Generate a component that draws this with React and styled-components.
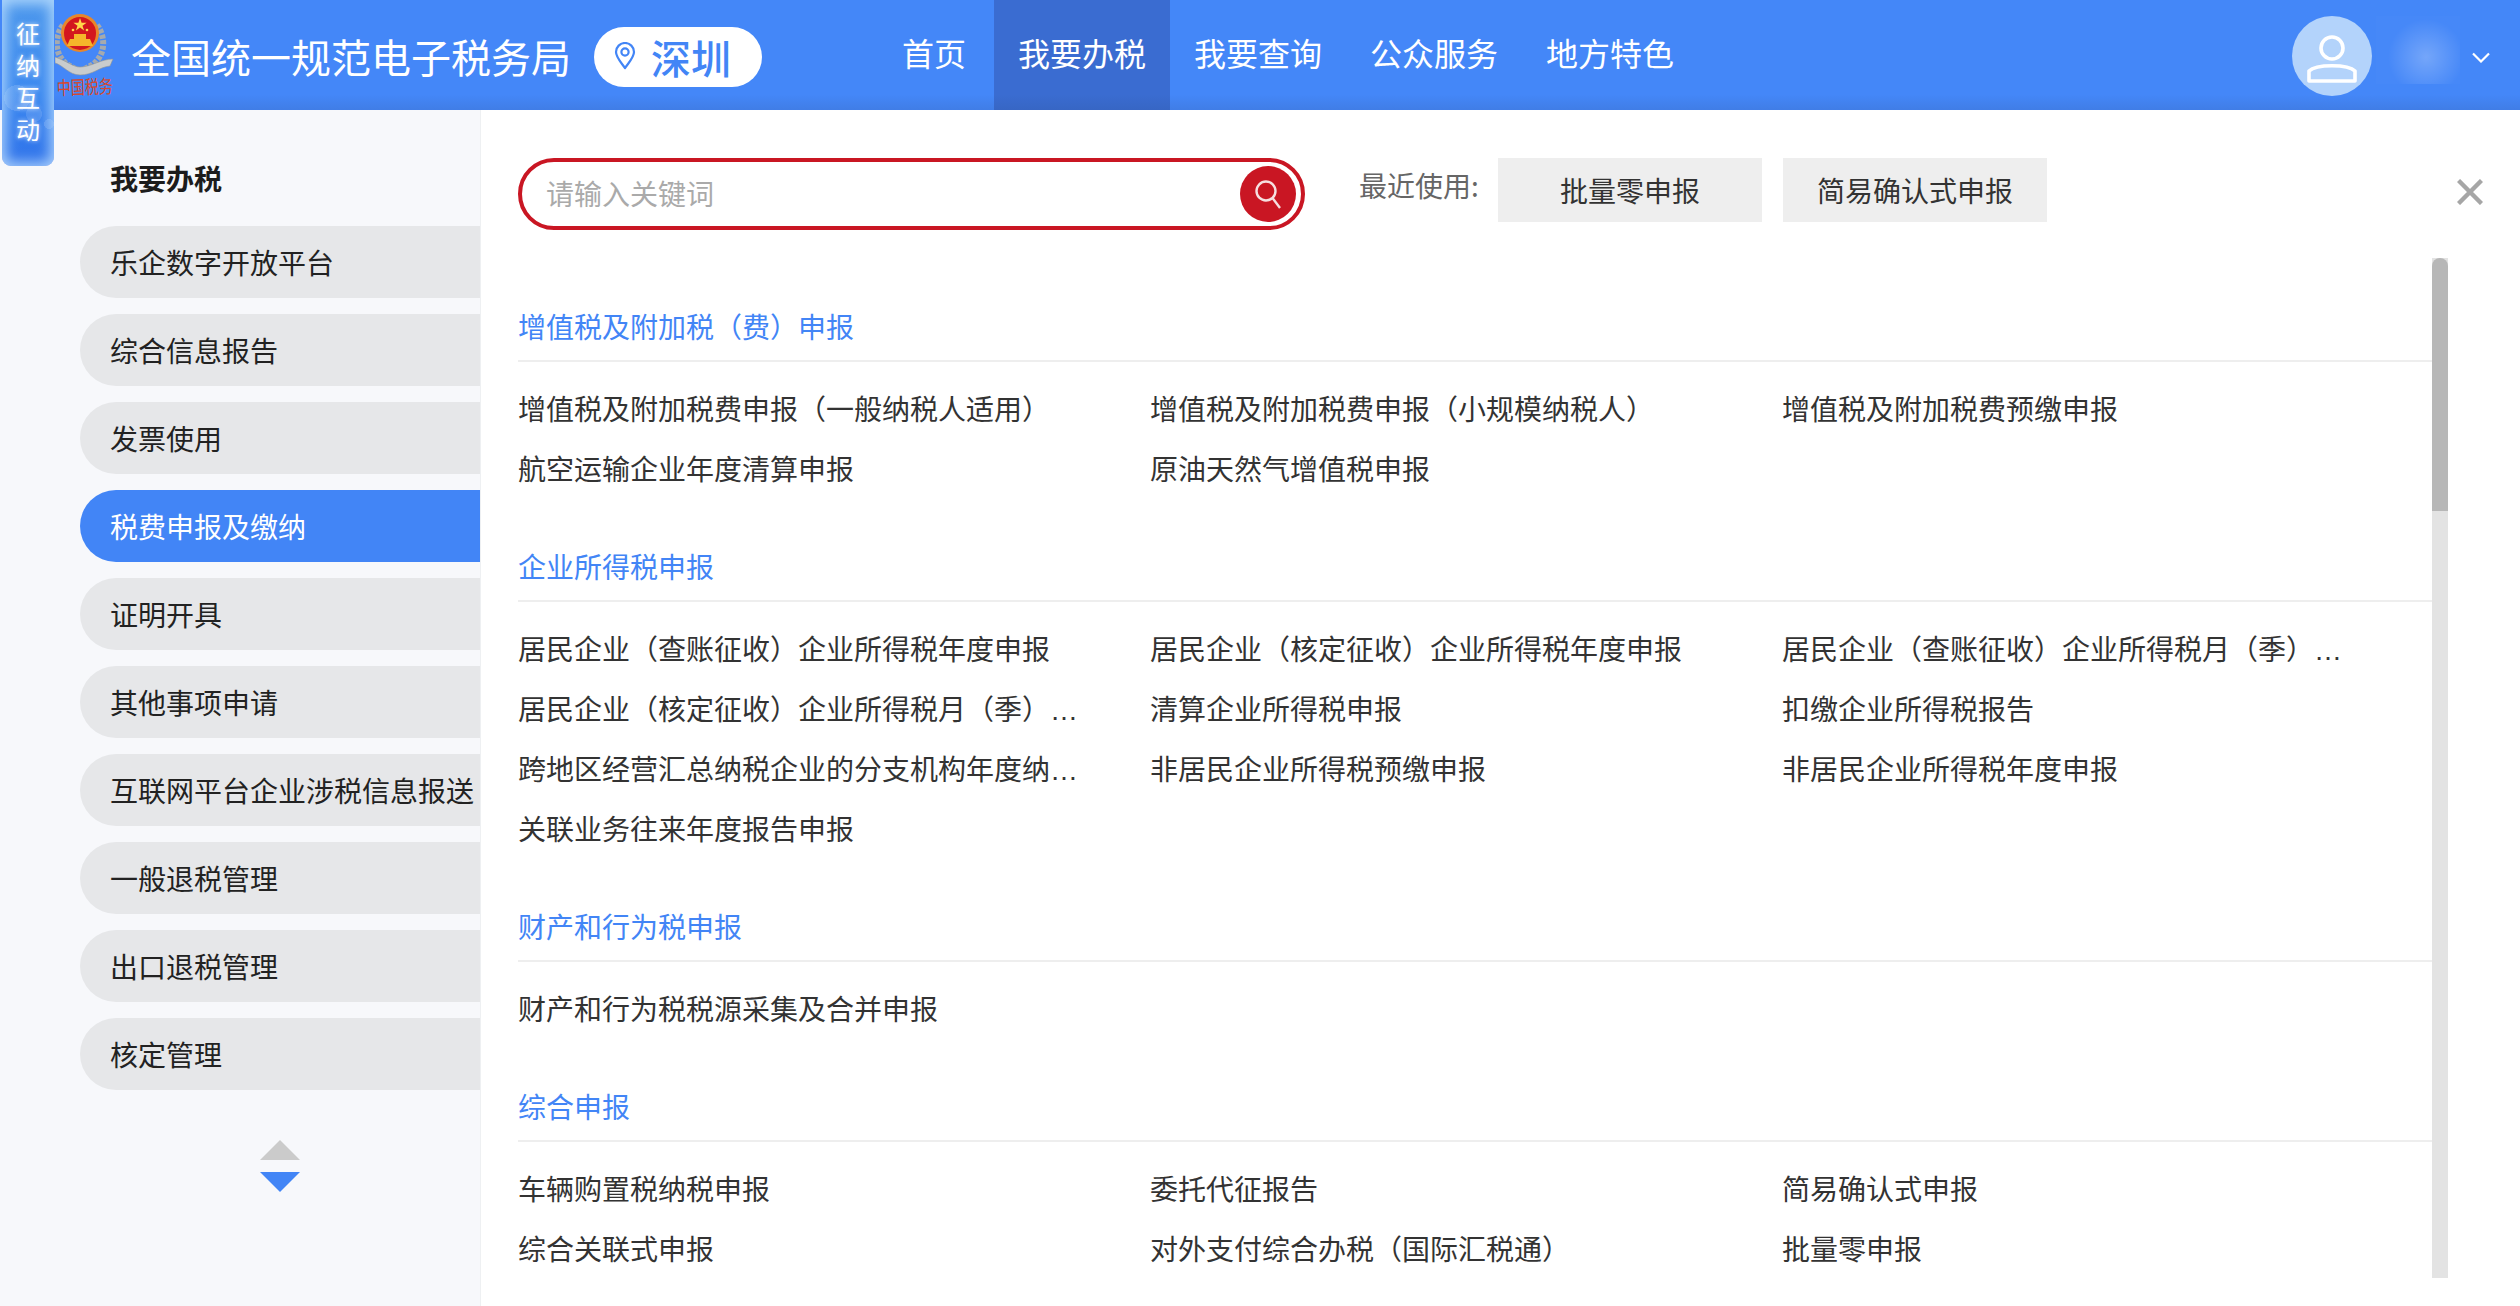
import React from 'react';
import styled, { createGlobalStyle } from 'styled-components';

const FONT = '"Noto Sans CJK SC", "Noto Sans", sans-serif';
const BLUE = '#4285f6';

const Global = createGlobalStyle`
  * { box-sizing: border-box; }
  html, body { margin: 0; padding: 0; height: 100%; background: #fff; font-family: ${FONT}; }
  #root { height: 100%; }
`;

const Page = styled.div`
  position: relative;
  display: flex;
  flex-direction: column;
  height: 100vh;
  overflow: hidden;
`;

const Header = styled.header`
  display: flex;
  align-items: center;
  flex: none;
  height: 110px;
  padding: 0 30px 0 55px;
  background: linear-gradient(#4487f8 0, #4487f8 86%, #407de6 100%);
  color: #fff;
`;

const Badge = styled.div`
  position: absolute;
  left: 2px;
  top: 0;
  z-index: 5;
  display: flex;
  flex-direction: column;
  align-items: center;
  width: 52px;
  height: 166px;
  padding-top: 17px;
  border-radius: 0 0 9px 9px;
  background:
    radial-gradient(circle 13px at 15px 98px, rgba(255, 255, 255, 0.14) 98%, transparent),
    radial-gradient(circle 8px at 32px 114px, rgba(255, 255, 255, 0.12) 98%, transparent),
    radial-gradient(circle 5px at 47px 124px, rgba(255, 255, 255, 0.14) 98%, transparent),
    linear-gradient(#4d98ec, #3d8af0 55%, #2f72ea);
  box-shadow: inset 0 0 13px 4px rgba(195, 228, 255, 0.8);
`;

const BadgeChar = styled.span`
  color: #fff;
  font-size: 24px;
  line-height: 32px;
  text-shadow: 0 0 4px rgba(255, 255, 255, 0.8);
`;

const LogoMark = styled.svg`
  flex: none;
  width: 60px;
  height: 86px;
  margin-top: 2px;
`;

const SiteTitle = styled.h1`
  margin: 2px 0 0 16px;
  font-size: 40px;
  font-weight: 400;
  line-height: 56px;
  white-space: nowrap;
`;

const CityPill = styled.div`
  display: flex;
  align-items: center;
  flex: none;
  width: 168px;
  height: 60px;
  margin: 4px 0 0 23px;
  padding-left: 20px;
  border-radius: 30px;
  background: #fff;
  color: ${BLUE};
  font-size: 40px;
  font-weight: 500;
`;

const CityName = styled.span`
  margin-left: 15px;
  line-height: 60px;
`;

const PinIcon = styled.svg`
  flex: none;
  margin-top: -2px;
`;

const Nav = styled.nav`
  display: flex;
  align-self: stretch;
  margin-left: 120px;
`;

const NavItem = styled.a`
  display: flex;
  align-items: center;
  padding: 0 0 6px ${p => (p.$short ? '20px' : '24px')};
  width: ${p => (p.$short ? '112px' : '176px')};
  font-size: 32px;
  white-space: nowrap;
  background: ${p => (p.$active ? 'linear-gradient(#3a6cd1 0, #3a6cd1 86%, #3766c4 100%)' : 'transparent')};
`;

const User = styled.div`
  display: flex;
  align-items: center;
  margin-left: auto;
  padding-top: 2px;
`;

const Avatar = styled.div`
  display: flex;
  align-items: center;
  justify-content: center;
  width: 80px;
  height: 80px;
  border-radius: 50%;
  background: #b3d3fb;
`;

const BlurredName = styled.div`
  width: 84px;
  height: 68px;
  margin: -12px 0 0 4px;
  background:
    radial-gradient(circle 38px at 50px 41px, rgba(255, 255, 255, 0.25), transparent),
    rgba(255, 255, 255, 0.015);
`;

const Chevron = styled.svg`
  width: 18px;
  height: 11px;
  margin-left: 12px;
  margin-top: 2px;
`;

const Body = styled.div`
  display: flex;
  flex: 1;
  min-height: 0;
`;

const Sidebar = styled.aside`
  flex: none;
  width: 481px;
  padding: 48px 0 0 80px;
  background: #f7f8fb;
  border-right: 1px solid #eef0f2;
`;

const SideTitle = styled.h2`
  margin: 0 0 28px 30px;
  font-size: 28px;
  font-weight: 700;
  line-height: 40px;
  color: #1c1c1c;
`;

const SideList = styled.div`
  display: flex;
  flex-direction: column;
  gap: 16px;
`;

const SideItem = styled.a`
  display: flex;
  align-items: center;
  height: 72px;
  padding: 0 0 1px 30px;
  border-radius: 36px 0 0 36px;
  font-size: 28px;
  white-space: nowrap;
  color: ${p => (p.$active ? '#fff' : '#222')};
  background: ${p => (p.$active ? BLUE : '#e6e7e9')};
`;

const Pager = styled.div`
  display: flex;
  flex-direction: column;
  align-items: center;
  gap: 12px;
  width: 400px;
  margin-top: 50px;
`;

const Triangle = styled.span`
  width: 0;
  height: 0;
  border-left: 20px solid transparent;
  border-right: 20px solid transparent;
  ${p => (p.$down ? `border-top: 20px solid ${BLUE};` : 'border-bottom: 20px solid #cbcbcb;')}
`;

const Main = styled.main`
  flex: 1;
  min-width: 0;
  padding-top: 48px;
  background: #fff;
`;

const TopRow = styled.div`
  display: flex;
  align-items: flex-start;
  height: 72px;
  padding: 0 37px 0 37px;
`;

const SearchBox = styled.form`
  display: flex;
  align-items: center;
  flex: none;
  width: 787px;
  height: 72px;
  padding: 0 5px 0 24px;
  border: 4px solid #c91623;
  border-radius: 36px;
`;

const SearchInput = styled.input`
  flex: 1;
  min-width: 0;
  height: 56px;
  padding: 0 0 3px;
  border: 0;
  outline: 0;
  font-family: ${FONT};
  font-size: 28px;
  color: #333;
  &::placeholder { color: #aaa; opacity: 1; }
`;

const SearchButton = styled.button`
  display: flex;
  align-items: center;
  justify-content: center;
  flex: none;
  width: 56px;
  height: 56px;
  padding: 0;
  border: 0;
  border-radius: 50%;
  background: #c91623;
`;

const RecentLabel = styled.span`
  flex: none;
  width: 121px;
  margin: 0 18px 0 54px;
  font-size: 28px;
  line-height: 54px;
  color: #666;
  white-space: nowrap;
`;

const RecentButton = styled.a`
  display: flex;
  align-items: center;
  justify-content: center;
  flex: none;
  width: 264px;
  height: 64px;
  margin-right: 21px;
  background: #eee;
  font-size: 28px;
  color: #333;
  white-space: nowrap;
`;

const CloseIcon = styled.svg`
  flex: none;
  width: 26px;
  height: 26px;
  margin: 21px 0 0 auto;
`;

const ContentRow = styled.div`
  display: flex;
  align-items: flex-start;
  margin-top: 28px;
  padding-left: 37px;
  padding-right: 72px;
`;

const SectionList = styled.div`
  flex: 1;
  min-width: 0;
  height: 1020px;
  padding-top: 48px;
  overflow: hidden;
`;

const Section = styled.section`
  margin-bottom: 48px;
`;

const SectionTitle = styled.h3`
  margin: 0 0 16px;
  padding-bottom: 14px;
  border-bottom: 2px solid #eeeeee;
  font-size: 28px;
  font-weight: 400;
  line-height: 40px;
  color: ${BLUE};
`;

const ItemGrid = styled.div`
  display: grid;
  grid-template-columns: repeat(3, 632px);
`;

const Item = styled.a`
  display: block;
  height: 60px;
  font-size: 28px;
  line-height: 60px;
  color: #333;
  white-space: nowrap;
`;

const Ellipsis = styled.span`
  font-family: "Liberation Sans", sans-serif;
`;

const ScrollTrack = styled.div`
  flex: none;
  width: 16px;
  height: 1020px;
  background: #e3e3e3;
`;

const ScrollThumb = styled.div`
  height: 253px;
  border-radius: 8px 8px 0 0;
  background: #b7b7b7;
`;

const navItems = ['首页', '我要办税', '我要查询', '公众服务', '地方特色'];
const sideItems = ['乐企数字开放平台', '综合信息报告', '发票使用', '税费申报及缴纳', '证明开具', '其他事项申请', '互联网平台企业涉税信息报送', '一般退税管理', '出口退税管理', '核定管理'];
const sections = [
  {
    title: '增值税及附加税（费）申报',
    items: ['增值税及附加税费申报（一般纳税人适用）', '增值税及附加税费申报（小规模纳税人）', '增值税及附加税费预缴申报', '航空运输企业年度清算申报', '原油天然气增值税申报'],
  },
  {
    title: '企业所得税申报',
    items: ['居民企业（查账征收）企业所得税年度申报', '居民企业（核定征收）企业所得税年度申报', '居民企业（查账征收）企业所得税月（季）…', '居民企业（核定征收）企业所得税月（季）…', '清算企业所得税申报', '扣缴企业所得税报告', '跨地区经营汇总纳税企业的分支机构年度纳…', '非居民企业所得税预缴申报', '非居民企业所得税年度申报', '关联业务往来年度报告申报'],
  },
  { title: '财产和行为税申报', items: ['财产和行为税税源采集及合并申报'] },
  {
    title: '综合申报',
    items: ['车辆购置税纳税申报', '委托代征报告', '简易确认式申报', '综合关联式申报', '对外支付综合办税（国际汇税通）', '批量零申报'],
  },
];

function Emblem() {
  return (
    <LogoMark viewBox="0 0 60 86">
      <path d="M8 12 C-1 24 -1 42 13 52 L24 58" fill="none" stroke="#a6aaad" strokeWidth="6" strokeDasharray="4 1.5" />
      <path d="M42 12 C51 24 51 42 37 52 L26 58" fill="none" stroke="#a6aaad" strokeWidth="6" strokeDasharray="4 1.5" />
      <path d="M0 44 C12 48 18 54 25 54 C36 54 46 46 58 46 L55 53 C44 54 38 62 25 62 C14 62 8 52 0 50 Z" fill="#c9cccd" stroke="#8f9396" strokeWidth="0.6" />
      <circle cx="25" cy="20" r="19" fill="#e8862a" />
      <path d="M9 20 A16 16 0 0 1 41 20 C41 29 36 36 25 37 C14 36 9 29 9 20 Z" fill="#d3161e" />
      <polygon points="25,5 26.6,9.8 31.6,9.8 27.5,12.7 29.1,17.5 25,14.6 20.9,17.5 22.5,12.7 18.4,9.8 23.4,9.8" fill="#ffd84a" />
      <circle cx="18" cy="17" r="1.3" fill="#ffd84a" />
      <circle cx="32" cy="17" r="1.3" fill="#ffd84a" />
      <path d="M15 26 L35 26 L38 33 L12 33 Z" fill="#f5b52a" />
      <rect x="19" y="21" width="12" height="5" fill="#f5b52a" />
      <text fontSize="14" fontFamily={FONT} fill="#d8472b" textLength="56" lengthAdjust="spacingAndGlyphs" transform="translate(2 82) rotate(-2) scale(1 1.35)">中国税务</text>
    </LogoMark>
  );
}

function ItemText({ text }) {
  if (!text.endsWith('…')) return text;
  return <>{text.slice(0, -1)}<Ellipsis>…</Ellipsis></>;
}

export default function App() {
  return (
    <Page>
      <Global />
      <Badge>
        {['征', '纳', '互', '动'].map(c => <BadgeChar key={c}>{c}</BadgeChar>)}
      </Badge>
      <Header>
        <Emblem />
        <SiteTitle>全国统一规范电子税务局</SiteTitle>
        <CityPill>
          <PinIcon width="22" height="28" viewBox="0 0 22 28" fill="none" stroke={BLUE} strokeWidth="2.2">
            <path d="M11 26 C6 19 2 15 2 10 A9 9 0 0 1 20 10 C20 15 16 19 11 26 Z" strokeLinejoin="round" />
            <circle cx="11" cy="10" r="3.6" />
          </PinIcon>
          <CityName>深圳</CityName>
        </CityPill>
        <Nav>
          {navItems.map((n, i) => (
            <NavItem key={n} $short={i === 0} $active={i === 1}>{n}</NavItem>
          ))}
        </Nav>
        <User>
          <Avatar>
            <svg width="52" height="60" viewBox="0 0 52 60" fill="none" stroke="#fff" strokeWidth="3.6">
              <circle cx="26" cy="22" r="11" />
              <path d="M3 55 L3 45 C10 38 42 38 49 45 L49 55 Z" strokeLinejoin="round" />
            </svg>
          </Avatar>
          <BlurredName />
          <Chevron viewBox="0 0 18 11" fill="none" stroke="#fff" strokeWidth="2.2">
            <path d="M1 1.5 L9 9.5 L17 1.5" />
          </Chevron>
        </User>
      </Header>
      <Body>
        <Sidebar>
          <SideTitle>我要办税</SideTitle>
          <SideList>
            {sideItems.map((s, i) => (
              <SideItem key={s} $active={i === 3}>{s}</SideItem>
            ))}
          </SideList>
          <Pager>
            <Triangle />
            <Triangle $down />
          </Pager>
        </Sidebar>
        <Main>
          <TopRow>
            <SearchBox onSubmit={e => e.preventDefault()}>
              <SearchInput placeholder="请输入关键词" />
              <SearchButton type="button" aria-label="搜索">
                <svg width="32" height="32" viewBox="0 0 32 32" fill="none" stroke="#f6dfe0" strokeWidth="2.4">
                  <circle cx="14" cy="13" r="9.5" />
                  <path d="M20.5 20 L28 30" />
                </svg>
              </SearchButton>
            </SearchBox>
            <RecentLabel>最近使用:</RecentLabel>
            <RecentButton>批量零申报</RecentButton>
            <RecentButton>简易确认式申报</RecentButton>
            <CloseIcon viewBox="0 0 26 26" fill="none" stroke="#a6a6a6" strokeWidth="4.4">
              <path d="M1.5 1.5 L24.5 24.5 M24.5 1.5 L1.5 24.5" />
            </CloseIcon>
          </TopRow>
          <ContentRow>
            <SectionList>
              {sections.map(sec => (
                <Section key={sec.title}>
                  <SectionTitle>{sec.title}</SectionTitle>
                  <ItemGrid>
                    {sec.items.map(it => <Item key={it}><ItemText text={it} /></Item>)}
                  </ItemGrid>
                </Section>
              ))}
            </SectionList>
            <ScrollTrack><ScrollThumb /></ScrollTrack>
          </ContentRow>
        </Main>
      </Body>
    </Page>
  );
}
